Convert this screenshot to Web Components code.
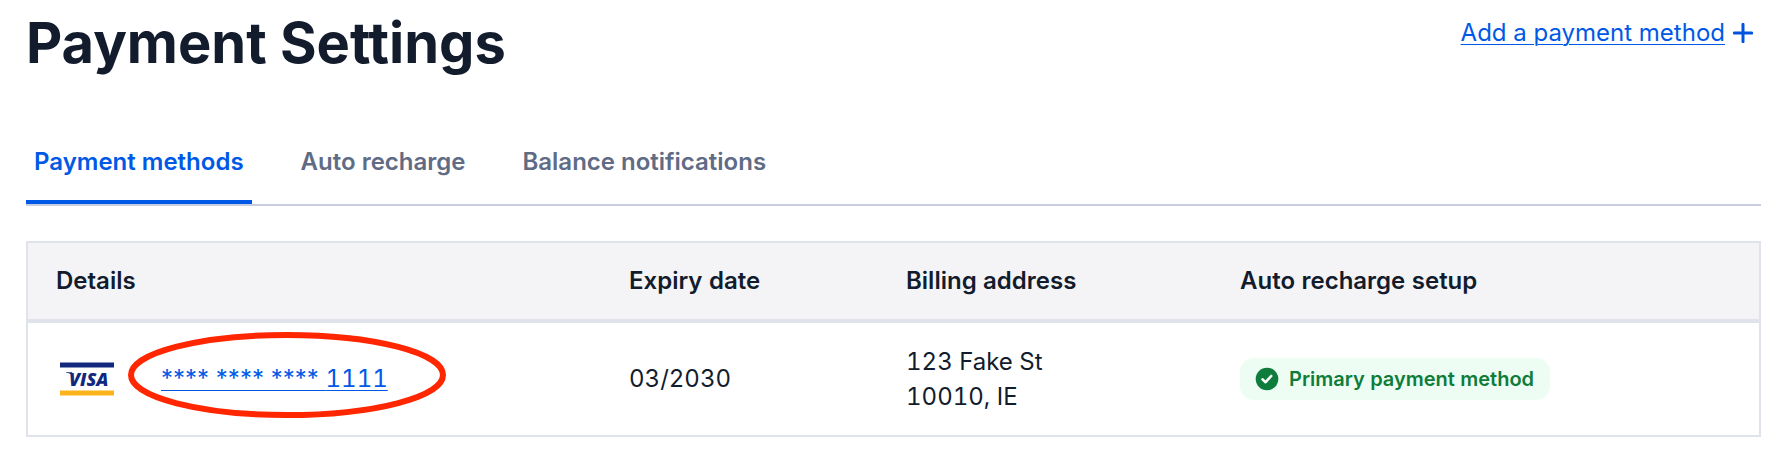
<!DOCTYPE html>
<html lang="en">
<head>
<meta charset="utf-8">
<title>Payment Settings</title>
<style>
body { margin: 0; background: #fff; color: #121c2d; font: 400 24px/35px Inter, "Liberation Sans", sans-serif; }
</style>
</head>
<body>
<payment-settings></payment-settings>
<script>
const define = (name, html) => {
  const template = document.createElement('template');
  template.innerHTML = html;
  customElements.define(name, class extends HTMLElement {
    constructor() {
      super();
      this.attachShadow({ mode: 'open' }).append(template.content.cloneNode(true));
    }
  });
};

define('text-link', `
<style>
  :host { display: inline-flex; align-items: center; gap: 8px; }
  a { color: #0059e6; text-decoration: underline; text-decoration-thickness: 1px; text-underline-offset: 3px; white-space: nowrap; }
</style>
<a href="#"><slot></slot></a><slot name="icon"></slot>`);

define('plus-icon', `
<style>:host { display: block; } svg { display: block; }</style>
<svg width="20" height="20" viewBox="0 0 20 20" aria-hidden="true"><path d="M10 1.3v17.4M1.3 10h17.4" stroke="#0052e0" stroke-width="3" stroke-linecap="round"/></svg>`);

define('page-header', `
<style>
  :host { display: flex; justify-content: space-between; align-items: flex-start; }
  h1 { margin: 0; font-size: 56px; line-height: 64px; font-weight: 700; }
  .action { padding-right: 8px; }
</style>
<h1><slot></slot></h1><div class="action"><slot name="action"></slot></div>`);

define('tab-item', `
<style>
  :host { display: block; }
  button { display: block; font: inherit; font-weight: 600; color: #606b85; background: none; border: 0; border-bottom: 4px solid transparent; padding: 0 8px 21px; cursor: pointer; white-space: nowrap; }
  :host([selected]) button { color: #0059e6; border-color: #0059e6; }
</style>
<button type="button"><slot></slot></button>`);

define('tab-list', `
<style>
  :host { display: flex; gap: 41px; border-bottom: 2px solid #c9cddf; }
</style>
<slot></slot>`);

define('visa-logo', `
<style>:host { display: block; } svg { display: block; }</style>
<svg width="54" height="34" viewBox="0 0 54 34" role="img" aria-label="Visa">
  <path fill="#10297f" d="M0 .5h54v5H0z"/><path fill="#fdb41c" d="M0 28.500h54v5H0z"/>
  <path fill="#10297f" d="M6 10.300h6l1.200 4-2-1.800q-2-1.400-5.200-1.700z"/>
  <text x="9" y="23.500" fill="#10297f" font-family="Open Sans, sans-serif" font-size="18" font-weight="800" font-style="italic">VISA</text>
</svg>`);

define('marked-area', `
<style>
  :host { display: block; position: relative; }
  svg { position: absolute; left: -33px; top: -29px; pointer-events: none; }
</style>
<slot></slot>
<svg width="318" height="86" viewBox="0 0 318 86" aria-hidden="true"><ellipse cx="159" cy="43" rx="156" ry="40" fill="none" stroke="#ff2600" stroke-width="6"/></svg>`);

define('status-badge', `
<style>
  :host { display: inline-flex; align-items: center; gap: 10px; background: #edfdf3; color: #0e7c3a; border-radius: 14px; padding: 4px 16px 4px 15px; font-size: 20px; line-height: 34px; font-weight: 600; white-space: nowrap; vertical-align: middle; }
  svg { display: block; }
</style>
<svg width="24" height="24" viewBox="0 0 24 24" aria-hidden="true"><circle cx="12" cy="12" r="11.300" fill="#0e7c3a"/><path d="M7.600 12.400l3 2.800 5.600-6.200" fill="none" stroke="#fff" stroke-width="2.600" stroke-linecap="round" stroke-linejoin="round"/></svg>
<span><slot></slot></span>`);

define('methods-table', `
<style>
  :host { display: block; }
  table { width: 100%; table-layout: fixed; border-collapse: separate; border-spacing: 0; border: 2px solid #e1e3ea; box-sizing: border-box; font-variant-numeric: tabular-nums; }
  th, td { text-align: left; padding: 0 29px; vertical-align: middle; }
  th { background: #f4f4f6; font-weight: 600; height: 74px; padding-bottom: 2px; border-bottom: 4px solid #e1e3ea; }
  td { height: 111px; padding-bottom: 1px; }
  th:first-child, td:first-child { padding-left: 28px; }
  th:last-child, td:last-child { padding-right: 0; }
  .details { width: 572px; } .expiry { width: 277px; } .address { width: 334px; }
  .card { display: flex; align-items: center; gap: 47px; padding-left: 4px; }
  .mask { font-variant-numeric: normal; }
</style>
<table>
  <colgroup><col class="details"><col class="expiry"><col class="address"><col></colgroup>
  <thead><tr><th scope="col">Details</th><th scope="col">Expiry date</th><th scope="col">Billing address</th><th scope="col">Auto recharge setup</th></tr></thead>
  <tbody><tr>
    <td><div class="card"><visa-logo></visa-logo><marked-area><text-link><span class="mask">**** **** **** </span>1111</text-link></marked-area></div></td>
    <td>03/2030</td>
    <td>123 Fake St<br>10010, IE</td>
    <td><status-badge>Primary payment method</status-badge></td>
  </tr></tbody>
</table>`);

define('payment-settings', `
<style>
  :host { display: block; padding: 11px 17px 37px 26px; }
  .link { padding-top: 4px; display: block; }
  tab-list { margin-top: 69px; }
  methods-table { margin-top: 35px; }
</style>
<page-header>Payment Settings<div class="link" slot="action"><text-link>Add a payment method<plus-icon slot="icon"></plus-icon></text-link></div></page-header>
<tab-list><tab-item selected>Payment methods</tab-item><tab-item>Auto recharge</tab-item><tab-item>Balance notifications</tab-item></tab-list>
<methods-table></methods-table>`);
</script>
</body>
</html>
